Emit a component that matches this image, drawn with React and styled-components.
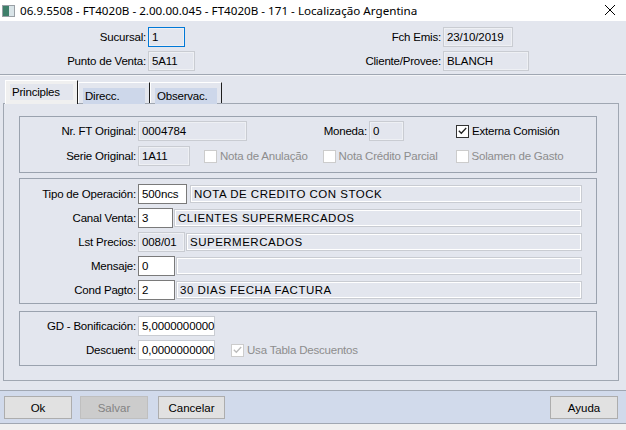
import React from "react";
import styled, { createGlobalStyle } from "styled-components";

const Global = createGlobalStyle`
  html, body { margin: 0; padding: 0; }
  body { background: #f0f0f0; font-family: "Liberation Sans", Arial, sans-serif; }
`;

const Window = styled.div`
  width: 626px;
  height: 430px;
  display: flex;
  flex-direction: column;
  background: #e3e6ee;
  overflow: hidden;
`;

const TitleBar = styled.div`
  height: 21px;
  flex: none;
  background: #ffffff;
  display: flex;
  align-items: center;
  padding-left: 2px;
  box-sizing: border-box;
  font-family: "Noto Sans", "Liberation Sans", sans-serif;
  font-size: 11.65px;
  color: #000;
  position: relative;
`;

const TitleText = styled.span`
  margin-left: 5px;
`;

const CloseBtn = styled.div`
  position: absolute;
  right: 10px;
  top: 4px;
  width: 12px;
  height: 12px;
`;

const Header = styled.div`
  display: grid;
  grid-template-columns: 300px 1fr;
  padding-top: 6px;
`;

const Col = styled.div`
  display: flex;
  flex-direction: column;
  gap: 4px;
`;

const Row = styled.div`
  display: flex;
  align-items: center;
  height: 20px;
`;

const Label = styled.span`
  width: ${(p) => p.$w}px;
  flex: none;
  text-align: right;
  margin-right: 2px;
  font-size: 11.5px;
  color: #000;
  white-space: nowrap;
  letter-spacing: -0.2px;
`;

const Field = styled.div`
  box-sizing: border-box;
  width: ${(p) => p.$w}px;
  height: 20px;
  flex: none;
  display: flex;
  align-items: center;
  padding-left: 3px;
  font-size: 11.5px;
  white-space: nowrap;
  letter-spacing: -0.1px;
  color: #000;
  background: ${(p) => (p.$white ? "#ffffff" : "#e3e6ee")};
  border: 1px solid
    ${(p) =>
      p.$focus ? "#0078d7" : p.$white ? (p.$soft ? "#c9ccd2" : "#7a7a7a") : "#c9ccd2"};
  box-shadow: ${(p) => (p.$white ? "none" : "inset 0 0 0 1px #eef0f4")};
  margin-left: ${(p) => p.$ml || 0}px;
`;

const Desc = styled(Field)`
  border: 1px solid #c9ccd2;
  box-shadow: inset 1px 1px 0 #ffffff, inset -1px -1px 0 #ffffff;
  height: 18px;
  letter-spacing: 0.5px;
`;

const Separator = styled.div`
  margin-top: 3px;
  height: 1px;
  background: #a0a7b2;
  border-bottom: 1px solid #f4f5f8;
`;

const Tabs = styled.div`
  display: flex;
  align-items: flex-end;
  margin: 4px 0 0 5px;
  height: 23px;
  position: relative;
  z-index: 1;
`;

const Tab = styled.div`
  box-sizing: border-box;
  width: ${(p) => p.$w}px;
  height: ${(p) => (p.$active ? 24 : 21)}px;
  margin-bottom: ${(p) => (p.$active ? -1 : 0)}px;
  background: ${(p) => (p.$active ? "#f0f0f0" : "#e3e6ee")};
  border-top: 1px solid #ffffff;
  border-left: 1px solid #ffffff;
  border-right: 1px solid #1e1e1e;
  padding: ${(p) => (p.$active ? "3px 4px 3px 4px" : "2px 4px 1px 4px")};
  display: flex;
  font-size: 11.5px;
  letter-spacing: -0.2px;
`;

const TabInner = styled.div`
  flex: 1;
  height: 16px;
  background: ${(p) => (p.$active ? "#e3e6ee" : "#cdd7ea")};
  display: flex;
  align-items: center;
  padding-left: 2px;
  margin-top: ${(p) => (p.$active ? 0 : 3)}px;
`;

const Panel = styled.div`
  margin: 0 7px 0 3px;
  border: 1px solid #a0a7b2;
  padding: 12px 21px 14px 15px;
  display: flex;
  flex-direction: column;
  gap: 5px;
`;

const Group = styled.div`
  border: 1px solid #9aa2ae;
  padding: ${(p) => p.$pad};
  margin-top: ${(p) => p.$mt || 0}px;
  display: flex;
  flex-direction: column;
  gap: ${(p) => p.$gap}px;
`;

const CheckWrap = styled.label`
  display: flex;
  align-items: center;
  margin-left: ${(p) => p.$ml || 0}px;
  font-size: 11.5px;
  letter-spacing: -0.2px;
  color: ${(p) => (p.$disabled ? "#8d8d8d" : "#000")};
  white-space: nowrap;
`;

const Box = styled.span`
  box-sizing: border-box;
  width: 13px;
  height: 13px;
  margin-right: 3px;
  background: #ffffff;
  border: 1px solid ${(p) => (p.$disabled ? "#cccccc" : "#333333")};
  display: flex;
  align-items: center;
  justify-content: center;
`;

const Check = ({ checked, disabled, label, ml }) => (
  <CheckWrap $disabled={disabled} $ml={ml}>
    <Box $disabled={disabled}>
      {checked && (
        <svg width="9" height="8" viewBox="0 0 9 8">
          <path
            d="M0.8 3.8 L3.3 6.3 L8.2 1"
            fill="none"
            stroke={disabled ? "#bcbcbc" : "#222"}
            strokeWidth="1.3"
          />
        </svg>
      )}
    </Box>
    {label}
  </CheckWrap>
);

const Spacer = styled.div`
  flex: 1;
`;

const ButtonBar = styled.div`
  margin-top: 9px;
  height: 34px;
  flex: none;
  box-sizing: border-box;
  background: #d1daeb;
  border-top: 1px solid #a0a7b2;
  border-bottom: 1px solid #a0a7b2;
  display: flex;
  align-items: center;
  padding: 1px 8px 0 4px;
  gap: 8px;
`;

const Btn = styled.button`
  box-sizing: border-box;
  width: ${(p) => p.$w || 68}px;
  height: 23px;
  margin-left: ${(p) => p.$ml || 0}px;
  background: ${(p) => (p.disabled ? "#cccccc" : "#e1e1e1")};
  border: 1px solid ${(p) => (p.disabled ? "#bfbfbf" : "#adadad")};
  color: ${(p) => (p.disabled ? "#838383" : "#000")};
  font-family: "Liberation Sans", Arial, sans-serif;
  font-size: 11.5px;
  padding: 0;
`;

const Footer = styled.div`
  flex: 1;
  background: #f0f0f0;
`;

export default function App() {
  return (
    <>
      <Global />
      <Window>
        <TitleBar>
          <svg width="13" height="12" viewBox="0 0 13 12">
            <rect x="0.5" y="0.5" width="12" height="11" fill="#f4f4f4" stroke="#9aa0a6" />
            <rect x="1" y="1" width="6" height="10" fill="#3f7f6a" />
            <rect x="7" y="1" width="5" height="10" fill="#d9e4e8" />
          </svg>
          <TitleText>
            06.9.5508 - FT4020B - 2.00.00.045 - FT4020B - 171 - Localização Argentina
          </TitleText>
          <CloseBtn>
            <svg width="12" height="12" viewBox="0 0 12 12">
              <path d="M1 1 L11 11 M11 1 L1 11" stroke="#000" strokeWidth="1" />
            </svg>
          </CloseBtn>
        </TitleBar>

        <Header>
          <Col>
            <Row>
              <Label $w={146}>Sucursal:</Label>
              <Field $w={37} $focus>1</Field>
            </Row>
            <Row>
              <Label $w={146}>Punto de Venta:</Label>
              <Field $w={47}>5A11</Field>
            </Row>
          </Col>
          <Col>
            <Row>
              <Label $w={141}>Fch Emis:</Label>
              <Field $w={70}>23/10/2019</Field>
            </Row>
            <Row>
              <Label $w={141}>Cliente/Provee:</Label>
              <Field $w={86}>BLANCH</Field>
            </Row>
          </Col>
        </Header>

        <Separator />

        <Tabs>
          <Tab $w={73} $active>
            <TabInner $active>Principles</TabInner>
          </Tab>
          <Tab $w={72}>
            <TabInner>Direcc.</TabInner>
          </Tab>
          <Tab $w={72}>
            <TabInner>Observac.</TabInner>
          </Tab>
        </Tabs>

        <Panel>
          <Group $pad="4px 0 6px 0" $gap={5}>
            <Row>
              <Label $w={116}>Nr. FT Original:</Label>
              <Field $w={109}>0004784</Field>
              <Label $w={120}>Moneda:</Label>
              <Field $w={35}>0</Field>
              <Check ml={52} checked label="Externa Comisión" />
            </Row>
            <Row>
              <Label $w={116}>Serie Original:</Label>
              <Field $w={52}>1A11</Field>
              <Check ml={14} disabled label="Nota de Anulação" />
              <Check ml={15} disabled label="Nota Crédito Parcial" />
              <Check ml={18} disabled label="Solamen de Gasto" />
            </Row>
          </Group>

          <Group $pad="5px 0 3px 0" $gap={4}>
            <Row>
              <Label $w={116}>Tipo de Operación:</Label>
              <Field $w={49} $white>500ncs</Field>
              <Desc $w={392} $ml={3}>NOTA DE CREDITO CON STOCK</Desc>
            </Row>
            <Row>
              <Label $w={116}>Canal Venta:</Label>
              <Field $w={35} $white>3</Field>
              <Desc $w={408} $ml={1}>CLIENTES SUPERMERCADOS</Desc>
            </Row>
            <Row>
              <Label $w={116}>Lst Precios:</Label>
              <Field $w={47}>008/01</Field>
              <Desc $w={396} $ml={1}>SUPERMERCADOS</Desc>
            </Row>
            <Row>
              <Label $w={116}>Mensaje:</Label>
              <Field $w={37} $white>0</Field>
              <Desc $w={406} $ml={1}></Desc>
            </Row>
            <Row>
              <Label $w={116}>Cond Pagto:</Label>
              <Field $w={37} $white>2</Field>
              <Desc $w={406} $ml={1}>30 DIAS FECHA FACTURA</Desc>
            </Row>
          </Group>

          <Group $pad="4px 0 5px 0" $gap={4} $mt={2}>
            <Row>
              <Label $w={116}>GD - Bonificación:</Label>
              <Field $w={77} $white $soft>5,0000000000</Field>
            </Row>
            <Row>
              <Label $w={116}>Descuent:</Label>
              <Field $w={77} $white $soft>0,0000000000</Field>
              <Check ml={16} checked disabled label="Usa Tabla Descuentos" />
            </Row>
          </Group>
        </Panel>

        <ButtonBar>
          <Btn>Ok</Btn>
          <Btn disabled>Salvar</Btn>
          <Btn $w={67} $ml={2}>Cancelar</Btn>
          <Spacer />
          <Btn>Ayuda</Btn>
        </ButtonBar>
        <Footer />
      </Window>
    </>
  );
}
